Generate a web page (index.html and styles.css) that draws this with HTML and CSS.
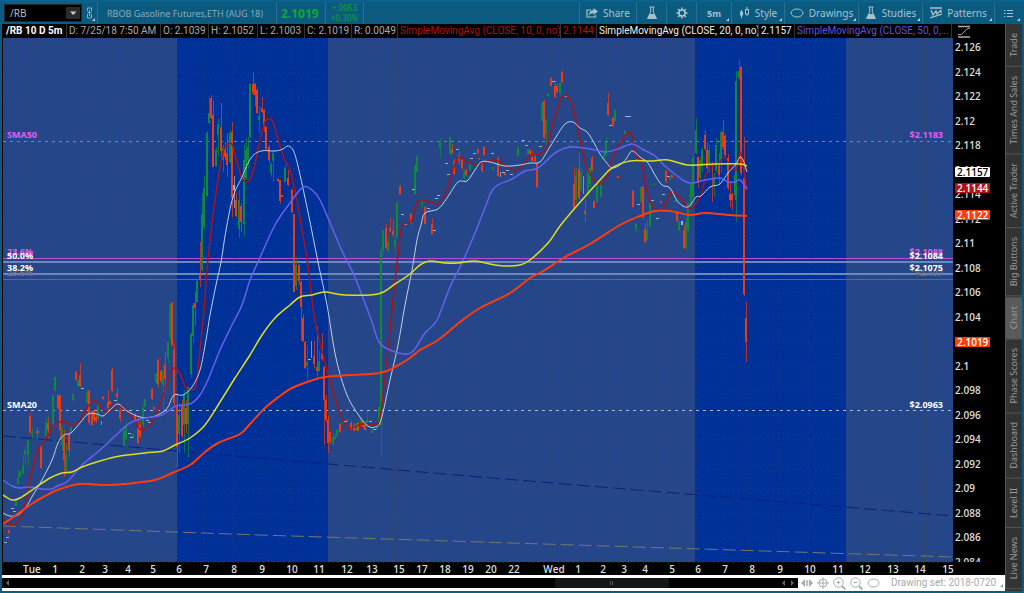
FILE: index.html
```html
<!DOCTYPE html>
<html lang="en">
<head>
    <meta charset="UTF-8">
    <meta name="viewport" content="width=device-width, initial-scale=1.0">
    <title>/RB 10 D 5m</title>
    <link rel="stylesheet" href="styles.css">
</head>
<body>
    <header class="toolbar">
        <div class="symbol">
            <select aria-label="Symbol">
                <option>/RB</option>
            </select>
            <svg class="symbol-arrow" viewBox="0 0 14 12"><rect width="14" height="12" rx="1" fill="#2b2b2b"/><path d="M4 4.500h6.500L7.200 8z" fill="#ccc"/></svg>
        </div>
        <button class="link-btn corner" aria-label="Link">
            <svg width="8" height="12" viewBox="0 0 8 12" fill="none" stroke="#8fa9b5"><path d="M1.500 4V1h4v3M1.500 7v4h4V7M3.500 3v6M1.500 5.500h4"/></svg>
        </button>
        <span class="title">RBOB Gasoline Futures,ETH (AUG 18)</span>
        <span class="last">2.1019</span>
        <span class="change"><span>+.0063</span><span>+0.30%</span></span>
        <span class="spacer"></span>
        <button class="tool share">
            <svg width="12" height="10" viewBox="0 0 12 10"><path d="M5 2H1v7h8.500V7" fill="none" stroke="#a9c0cb" stroke-width="1.200"/><path d="M7.500 0L12 3.500 7.500 7V5Q4 5 2.800 7.500 3 2.300 7.500 2z" fill="#a9c0cb"/></svg>
            Share
        </button>
        <button class="tool flask" aria-label="Lab">
            <svg width="12" height="14" viewBox="0 0 12 14"><path d="M3.500 1h5M4.700 1v5L1.500 12.500h9L7.300 6V1" fill="none" stroke="#a9c0cb"/><path d="M3.700 8h4.600l2.200 4.500h-9z" fill="#a9c0cb"/></svg>
        </button>
        <button class="tool gear" aria-label="Settings">
            <svg width="12" height="12" viewBox="0 0 12 12" fill="none" stroke="#b4c8d2"><circle cx="6" cy="6" r="3" stroke-width="1.500"/><path stroke-width="1.500" d="M6 .5v2M6 9.500v2M.5 6h2M9.500 6h2M2.100 2.100l1.400 1.400M8.500 8.500l1.400 1.400M2.100 9.900l1.400-1.400M8.500 3.500l1.400-1.400"/></svg>
        </button>
        <button class="tool period corner">5m</button>
        <button class="tool style corner">
            <svg width="11" height="12" viewBox="0 0 11 12"><path d="M2.500 3v8M8 0v9" stroke="#a9c0cb"/><rect x="1" y="4.500" width="3" height="4" fill="#a9c0cb"/><rect x="6.500" y="2.500" width="3" height="4.500" fill="#0b5b80" stroke="#a9c0cb"/></svg>
            Style
        </button>
        <button class="tool drawings corner">
            <svg width="14" height="10" viewBox="0 0 14 10"><ellipse cx="7" cy="5" rx="6" ry="4" fill="none" stroke="#a9c0cb"/></svg>
            Drawings
        </button>
        <button class="tool studies corner">
            <svg width="12" height="14" viewBox="0 0 12 14"><path d="M3.500 1h5M4.700 1v5L1.500 12.500h9L7.300 6V1" fill="none" stroke="#a9c0cb"/><path d="M3.700 8h4.600l2.200 4.500h-9z" fill="#a9c0cb"/></svg>
            Studies
        </button>
        <button class="tool patterns corner">
            <svg width="12" height="12" viewBox="0 0 12 12" fill="none" stroke="#a9c0cb" stroke-width="1.300"><path d="M0 1h12M0 11l12-4M1 3l2 5 3-4 1 3 4-4M11 3v3"/></svg>
            Patterns
        </button>
        <button class="tool menu corner" aria-label="Menu">
            <svg width="9" height="9" viewBox="0 0 9 9" stroke="#a9c0cb"><path d="M0 1.500h1.500M3 1.500h6M0 4.500h1.500M3 4.500h6M0 7.500h1.500M3 7.500h6"/></svg>
        </button>
    </header>

    <div class="main">
        <main class="chart-panel">
            <div class="info">
                <span class="name">/RB 10 D 5m</span>
                <span>D: 7/25/18 7:50 AM</span>
                <span>O: 2.1039</span>
                <span>H: 2.1052</span>
                <span>L: 2.1003</span>
                <span>C: 2.1019</span>
                <span>R: 0.0049</span>
                <span class="red">SimpleMovingAvg (CLOSE, 10, 0, no)</span>
                <span class="red">2.1144</span>
                <span class="white">SimpleMovingAvg (CLOSE, 20, 0, no)</span>
                <span class="white">2.1157</span>
                <span class="violet">SimpleMovingAvg (CLOSE, 50, 0,...</span>
                <svg class="scale-icon" width="14" height="13" viewBox="0 0 14 13" fill="none" stroke="#aaa"><path d="M1 1.500h12M1 12h12" stroke-width="1.500"/><path d="M1 9.500q4 1 6-2.500t6-4"/></svg>
            </div>

            <svg class="chart" id="chart" viewBox="2 38 1003 537" role="img" aria-label="/RB price chart">
                <defs>
                    <clipPath id="plot"><rect x="3" y="38" width="1002" height="524"/></clipPath>
                </defs>
                <rect x="2" y="38" width="1003" height="537" fill="#000"/>
                <rect x="3" y="38" width="950" height="524" fill="#254688"/>
                <rect x="177" y="38" width="151" height="524" fill="#003198"/>
                <rect x="695" y="38" width="151" height="524" fill="#003198"/>
                <g id="grid" class="grid"></g>
                <path class="day" d="M394.500 38V562M924.500 38V562"/>
                <polyline class="trend navy" points="3,436 480,477 953,516"/>
                <polyline class="trend tan" points="3,526 260,535 953,557"/>

                <path class="level sma50" d="M3 141.500H953"/>
                <path class="level sma20" d="M3 410.500H953"/>
                <path d="M3 258.500H953" stroke="#b94fd6"/>
                <path d="M3 262H953M3 274H953" stroke="#7088b8" stroke-width="2"/>
                <path d="M3 279.500H953" stroke="#5d6b82"/>

                <g id="candles"></g>
                <g id="averages" class="averages"></g>

                <g class="tag">
                    <text x="7" y="138" fill="#e85cf0">SMA50</text>
                    <text x="943" y="138" fill="#e85cf0" text-anchor="end">$2.1183</text>
                    <text x="7" y="408">SMA20</text>
                    <text x="943" y="408" text-anchor="end">$2.0963</text>
                    <text x="7" y="276" fill="#6d7078">23.6%</text>
                    <text x="943" y="276" fill="#6d7078" text-anchor="end">$2.107</text>
                    <text x="7" y="255" fill="#e85cf0">23.6%</text>
                    <text x="943" y="255" fill="#e85cf0" text-anchor="end">$2.1088</text>
                    <text x="7" y="259">50.0%</text>
                    <text x="943" y="259" text-anchor="end">$2.1084</text>
                    <text x="7" y="271">38.2%</text>
                    <text x="943" y="271" text-anchor="end">$2.1075</text>
                </g>
                <g id="prices" class="axis" clip-path="url(#plot)"></g>
                <g id="badges" class="axis"></g>
                <g id="times" class="axis time"></g>
            </svg>

            <footer class="bottom">
                <div class="scrollbar">
                    <svg width="4" height="6" viewBox="0 0 4 6"><path d="M4 0v6L1 3z" fill="#666"/></svg>
                    <div class="track"><div class="thumb"></div></div>
                    <svg width="4" height="6" viewBox="0 0 4 6"><path d="M4 0v6L1 3z" fill="#666"/></svg>
                    <svg width="4" height="6" viewBox="0 0 4 6"><path d="M0 0v6l3-3z" fill="#666"/></svg>
                </div>
                <div class="zoom-tools">
                    <button aria-label="Expand"><svg width="12" height="8" viewBox="0 0 12 8" fill="#aaa"><path d="M4 0v8L0 4zM8 0v8l4-4zM5 1h.8v6H5zM6.300 1h.8v6h-.8z"/></svg></button>
                    <button aria-label="Crosshair"><svg width="12" height="12" viewBox="0 0 12 12" fill="none" stroke="#aaa"><circle cx="6" cy="6" r="4"/><path d="M6 0v12M0 6h12"/></svg></button>
                    <button aria-label="Zoom in"><svg width="13" height="13" viewBox="0 0 13 13" fill="none" stroke="#aaa"><circle cx="5.500" cy="5.500" r="4.700"/><path d="M5.500 3.500v4M3.500 5.500h4"/><path d="M9 9l3.500 3.500" stroke-width="1.800"/></svg></button>
                    <button aria-label="Zoom out"><svg width="13" height="13" viewBox="0 0 13 13" fill="none" stroke="#aaa"><circle cx="5.500" cy="5.500" r="4.700"/><path d="M3.500 5.500h4"/><path d="M9 9l3.500 3.500" stroke-width="1.800"/></svg></button>
                    <button aria-label="Ellipse"><svg width="13" height="10" viewBox="0 0 13 10"><ellipse cx="6.500" cy="5" rx="5.500" ry="4" fill="none" stroke="#aaa"/></svg></button>
                </div>
                <button class="drawing-set corner">Drawing set: 2018-0720</button>
            </footer>
        </main>

        <nav class="tabs">
            <button>Trade</button>
            <button>Times And Sales</button>
            <button>Active Trader</button>
            <button>Big Buttons</button>
            <button class="active">Chart</button>
            <button>Phase Scores</button>
            <button>Dashboard</button>
            <button>Level II</button>
            <button>Live News</button>
        </nav>
    </div>
    <script src="chart.js"></script>
</body>
</html>
```
FILE: styles.css
```css
* {
    box-sizing: border-box;
}
body {
    margin: 0;
    min-height: 100vh;
    display: flex;
    flex-direction: column;
    font-family: "Noto Sans", "Open Sans", sans-serif;
    font-size: 10px;
    background-color: #0b5b80;
}
button {
    font: inherit;
    color: inherit;
    background: none;
    border: none;
    padding: 0;
    margin: 0;
    cursor: pointer;
}
svg {
    display: block;
    flex: none;
}

/* toolbar */
.toolbar {
    display: flex;
    align-items: stretch;
    height: 24px;
    padding: 2px 2px 0 4px;
    color: #a9c0cb;
    background: linear-gradient(#0a658f, #0b5b80 4px);
}
.symbol {
    position: relative;
    width: 78px;
    height: 18px;
    margin-top: 2px;
    background-color: #000;
    border: 1px solid #1c2a30;
}
.symbol select {
    appearance: none;
    width: 100%;
    height: 16px;
    padding: 0 5px;
    border: none;
    background: transparent;
    color: #bbb;
    font: inherit;
    line-height: 16px;
}
.symbol-arrow {
    position: absolute;
    right: 1px;
    top: 2px;
    width: 14px;
    height: 12px;
    pointer-events: none;
}
.link-btn {
    width: 15px;
    padding-left: 4px;
}
.corner {
    position: relative;
}
.corner::after {
    content: "";
    position: absolute;
    right: 2px;
    bottom: 3px;
    border-left: 3px solid transparent;
    border-bottom: 3px solid #c0d0d8;
}
.title,
.last,
.change {
    display: flex;
    align-items: center;
    padding: 0 5px;
    border-right: 1px solid #2a7091;
}
.title {
    width: 180px;
    padding-left: 9px;
    white-space: nowrap;
    font-size: 9px;
    color: #8fa9b5;
    border-left: 1px solid #2a7091;
}
.last {
    width: 49px;
    padding-left: 4px;
    font-size: 12px;
    font-weight: bold;
    color: #12a82c;
}
.change {
    width: 38px;
    flex-direction: column;
    justify-content: center;
    font-size: 8px;
    line-height: 10px;
    color: #12a030;
}
.spacer {
    flex: 1;
}
.tool {
    display: flex;
    align-items: center;
    justify-content: center;
    gap: 5px;
    border-left: 1px solid #2a7091;
}
.share {
    width: 57px;
}
.flask,
.gear {
    width: 30px;
}
.period {
    width: 35px;
    font-size: 9px;
    font-weight: bold;
}
.style {
    width: 53px;
}
.drawings {
    width: 74px;
}
.studies {
    width: 64px;
}
.patterns {
    width: 72px;
}
.menu {
    width: 28px;
}

/* chart */
.main {
    flex: 1;
    display: flex;
    padding: 0 2px 2px;
}
.chart-panel {
    flex: 1;
    min-width: 0;
    display: flex;
    flex-direction: column;
}
.info {
    display: grid;
    grid-template-columns: 65px 94px 48px 49px 47px 47px 46px 163px 36px 162px 36px 1fr 53px;
    height: 14px;
    line-height: 14px;
    font-family: Roboto, sans-serif;
    background-color: #000;
    color: #aaa;
}
.info span {
    overflow: hidden;
    padding-left: 2px;
    white-space: nowrap;
    border-right: 1px solid #333;
}
.info .name {
    padding-left: 4px;
    font-weight: bold;
    color: #fff;
}
.info .red {
    color: #b01010;
}
.info .white {
    color: #eee;
}
.info .violet {
    color: #5f55d8;
}
.scale-icon {
    margin: 1px 0 0 5px;
}
.chart {
    width: 100%;
    height: auto;
    font-family: "Open Sans", "Noto Sans", sans-serif;
    font-size: 10px;
    font-weight: 600;
    fill: #fff;
}
.tag {
    font-size: 9px;
    font-weight: 700;
}
.grid path {
    stroke: #4a4a58;
    stroke-opacity: 0.45;
    stroke-dasharray: 1 4;
}
.day {
    stroke: #3b4660;
    stroke-dasharray: 6 3;
}
.trend {
    fill: none;
    stroke-dasharray: 13 5;
}
.navy {
    stroke: #0d1f7c;
}
.tan {
    stroke: #77766f;
}
.level {
    stroke-dasharray: 3 4;
}
.sma50 {
    stroke: #b45fd0;
}
.sma20 {
    stroke: #aebbd6;
}
.up {
    stroke: #0f8a3c;
}
.down {
    stroke: #ee3a10;
}
.tick {
    stroke: #a0aec8;
}
.wick {
    stroke-opacity: 0.75;
}
.body {
    stroke-width: 2;
}
.averages {
    fill: none;
    stroke-linejoin: round;
}
.axis {
    fill: #ddd;
}
.time {
    text-anchor: middle;
}

/* bottom bar */
.bottom {
    display: flex;
    align-items: center;
    height: 16px;
    background-color: #fff;
    color: #aaa;
}
.scrollbar {
    flex: 1;
    display: flex;
    align-items: center;
    gap: 6px;
    height: 10px;
    padding: 0 3px;
    background-color: #000;
}
.track {
    flex: 1;
    height: 10px;
}
.thumb {
    width: 15%;
    height: 10px;
    margin-left: 71%;
    background: linear-gradient(90deg, #555 1px, transparent 1px 2px, #555 2px 3px, transparent 3px) center / 4px 4px no-repeat, #161616;
}
.zoom-tools {
    display: flex;
    align-items: center;
    gap: 4px;
    padding: 0 11px 0 3px;
}
.drawing-set {
    width: 114px;
    text-align: left;
    white-space: nowrap;
    line-height: 14px;
    font-family: Roboto, sans-serif;
}
.drawing-set::after {
    border-bottom-color: #999;
}

/* side tabs */
.tabs {
    display: flex;
    flex-direction: column;
    width: 17px;
    font-size: 9px;
    background-color: #333;
    color: #999;
}
.tabs button {
    width: 17px;
    padding: 9px 0;
    line-height: 16px;
    white-space: nowrap;
    writing-mode: vertical-rl;
    transform: rotate(180deg);
    border-top: 1px solid #555;
    border-right: 1px solid #555;
}
.tabs .active {
    background-color: #5a5a5a;
}
```
FILE: chart.js
```js
const NS = 'http://www.w3.org/2000/svg';

function add(parent, tag, attrs, text) {
    const el = document.createElementNS(NS, tag);
    for (const key in attrs) el.setAttribute(key, attrs[key]);
    if (text !== undefined) el.textContent = text;
    document.getElementById(parent).appendChild(el);
}

// time axis: label, x
const times = [['Tue', 32], [1, 55], [2, 82], [3, 105], [4, 128], [5, 153], [6, 179], [7, 206], [8, 234], [9, 262],
    [10, 292], [11, 319], [12, 347], [13, 372], [15, 399], [17, 422], [18, 445], [19, 468], [20, 491], [22, 514],
    ['Wed', 554], [1, 578], [2, 603], [3, 624], [4, 645], [5, 672], [6, 698], [7, 725], [8, 752], [9, 780],
    [10, 810], [11, 838], [12, 865], [13, 893], [14, 920], [15, 948]];
times.forEach(([label, x]) => {
    if (x < 940) add('grid', 'path', { d: `M${x - 2}.5 38V562` });
    add('times', 'text', { x: x, y: 573 }, label);
});

// price axis
for (let i = 0; i <= 21; i++) {
    const y = Math.round(47 + i * 24.52);
    add('grid', 'path', { d: `M3 ${y}.5H953` });
    add('prices', 'text', { x: 955, y: y + 4 }, parseFloat((2.126 - i * 0.002).toFixed(3)));
}

const badges = [[172, '2.1157', '#fff', '#000'], [188, '2.1144', '#b01212', '#fff'],
    [215, '2.1122', '#ff3c0a', '#fff'], [342, '2.1019', '#ff3c0a', '#fff']];
badges.forEach(([y, label, back, color]) => {
    add('badges', 'rect', { x: 955, y: y - 5, width: 35, height: 10, rx: 1, fill: back });
    add('badges', 'text', { x: 957, y: y + 4, fill: color }, label);
});

// candles: x, high, body top, body bottom, low
const up = `16,500,500,506,506 18,470,478,484,484 20,471,471,477,477 23,455,465,474,474 25,445,450,455,464 28,440,440,455,466
32,428,432,433,439 39,431,431,433,433 46,417,423,436,438 53,395,395,424,426 55,377,377,391,391 62,425,430,445,450
66,443,455,472,474 71,427,427,432,432 73,393,394,400,401 78,380,380,386,387 87,390,392,403,403 98,403,405,418,420
124,430,430,446,446 126,423,427,438,440 133,433,434,438,438 143,403,408,425,427 145,399,399,407,407 156,373,373,382,384
163,365,372,385,412 168,342,342,358,363 170,303,305,338,342 179,403,415,434,453 184,390,395,425,453 188,387,387,424,458
191,332,334,374,378 193,303,305,336,343 197,279,281,302,303 202,193,214,270,272 204,176,188,227,229 207,131,133,196,196
209,98,113,123,124 216,147,150,166,167 218,119,124,135,156 223,145,148,160,172 230,130,133,162,163 239,190,200,229,238
244,145,160,224,237 246,138,150,178,180 248,137,147,160,168 250,84,84,137,138 259,106,116,120,133 271,162,164,173,177
273,150,153,161,181 285,165,168,182,182 296,257,265,286,290 307,345,362,366,382 319,350,361,371,372 333,433,437,444,446
335,433,436,439,440 337,428,430,436,438 343,420,421,424,424 356,422,424,430,431 361,417,419,426,426 367,411,420,425,425
372,430,430,433,433 377,424,426,430,430 379,407,407,424,425 381,247,250,425,458 383,230,231,250,256 388,238,242,251,252
395,236,240,246,255 397,201,203,237,238 415,164,166,194,194 417,155,157,172,173 422,200,202,204,208 440,138,141,148,157
450,137,137,154,155 464,169,173,178,181 470,164,164,170,171 493,167,167,170,170 518,146,148,156,157 528,149,149,154,154
542,101,103,121,121 546,119,120,134,145 548,93,93,96,97 560,82,83,93,94 570,145,145,148,148 576,168,175,200,203
581,168,172,190,192 588,168,170,194,197 590,165,168,184,187 597,184,184,202,203 601,180,184,197,197 604,150,153,158,160
606,137,142,155,156 615,109,110,121,122 625,130,131,134,137 636,223,224,229,233 641,186,187,202,203 647,220,230,240,241
650,202,203,226,227 654,183,184,185,185 670,177,178,180,180 675,200,200,202,202 679,220,222,230,231 686,218,222,248,250
688,202,203,230,231 691,182,184,206,208 693,156,158,197,200 696,118,130,153,154 700,157,160,178,180 702,147,150,166,172
709,145,150,165,173 714,173,178,186,197 716,138,145,170,173 721,130,132,160,173 735,167,175,195,200 736,71,81,200,222
739,59,71,78,80`;
const down = `9,530,530,533,533 30,413,416,432,434 37,427,431,433,437 41,445,445,468,469 48,417,423,430,438 58,395,395,408,410
60,395,395,430,440 64,430,435,460,477 69,432,434,450,457 76,371,372,380,381 80,363,375,386,387 89,390,391,423,425
92,411,411,425,425 94,410,411,420,422 96,415,417,421,423 103,396,397,399,400 108,390,402,408,410 112,368,370,391,392
117,388,393,397,400 120,408,410,418,422 110,401,401,404,405 135,413,415,420,423 138,418,428,443,444 140,422,425,436,438
152,388,389,399,400 154,407,407,409,410 158,358,360,384,387 161,370,371,381,383 165,352,365,379,393 172,302,303,345,347
174,343,349,403,407 177,393,405,447,467 182,400,406,436,438 186,400,408,424,433 195,292,303,308,325 200,242,274,280,287
211,95,98,118,119 213,100,115,167,167 221,103,127,151,157 225,142,147,157,160 227,133,153,165,177 232,122,132,198,217
236,193,200,216,217 241,203,206,222,232 253,72,84,93,95 255,83,84,95,106 257,87,90,113,114 262,97,108,112,113
264,109,110,126,132 266,126,127,149,150 269,145,147,160,163 278,178,179,181,182 280,180,180,201,204 282,195,195,197,197
288,170,178,185,186 292,189,190,212,213 294,214,214,292,292 299,264,265,281,285 301,281,282,307,341 303,314,318,341,342
305,341,342,368,369 314,341,356,364,368 317,326,367,371,377 322,333,353,359,361 324,366,367,400,445 326,395,400,420,422
328,416,420,443,453 330,431,432,442,444 340,423,424,432,433 347,419,420,421,421 351,421,423,430,430 354,423,425,431,431
358,422,423,431,431 363,420,421,427,428 365,421,424,430,431 386,224,228,248,249 390,218,228,231,232 393,219,231,235,237
400,185,186,194,194 411,213,214,224,225 425,206,207,224,225 432,218,224,234,234 452,144,149,153,154 454,159,161,174,175
459,151,156,161,165 462,158,160,168,170 466,169,170,175,176 478,149,149,153,154 479,158,158,159,160 482,163,165,171,172
484,146,147,155,156 498,157,159,176,177 505,173,173,175,176 530,149,150,154,156 532,151,157,161,162 535,154,157,161,162
537,162,163,187,188 544,100,101,138,139 551,77,78,86,86 555,81,86,97,98 557,84,86,92,93 562,71,72,82,83
574,167,184,208,210 579,153,169,198,200 585,199,211,214,222 592,156,158,170,171 594,201,201,208,208 608,93,103,115,116
613,117,118,126,127 618,176,176,178,178 633,190,191,207,208 643,186,187,217,219 645,223,229,242,243 661,201,201,203,204
666,170,171,181,183 672,175,175,178,178 677,211,212,221,222 684,225,230,248,249 698,156,157,183,188 705,130,135,149,151
707,142,150,168,173 712,162,164,166,202 719,153,166,175,185 723,120,132,147,150 725,134,136,155,157 728,154,158,188,190
730,183,194,200,207 732,193,194,200,210 741,66,67,173,175 744,137,178,294,296 746,302,318,342,362`;
const neutral = `234,176,185,190,208 311,341,341,341,358 583,176,176,176,194 101,421,421,421,425 652,222,222,222,222 682,221,221,225,225 500,172,172,172,177`;

function drawCandles(rows, name) {
    rows.split(/\s+/).forEach(row => {
        const [x, high, top, bottom, low] = row.split(',');
        add('candles', 'path', { class: name + ' wick', d: `M${x}.5 ${high}V${low}` });
        add('candles', 'path', { class: name + ' body', d: `M${x} ${top}V${bottom}` });
    });
}
drawCandles(neutral, 'tick');
drawCandles(up, 'up');
drawCandles(down, 'down');

// bars with no range
const flat = [[5, 542], [7, 537], [12, 508], [14, 511], [82, 388], [115, 400], [129, 433], [131, 437], [147, 420], [149, 422],
    [309, 359], [402, 214], [405, 224], [413, 189], [428, 208], [436, 198], [438, 195], [434, 230], [446, 163], [448, 174],
    [457, 149], [471, 158], [474, 153], [492, 153], [503, 172], [507, 170], [511, 174], [523, 140], [526, 145], [540, 146],
    [553, 81], [565, 96], [610, 125], [626, 116], [629, 116], [638, 204], [652, 200], [657, 218], [663, 194], [668, 176], [345, 421], [370, 421], [374, 429]];
flat.forEach(([x, y]) => add('candles', 'path', { class: 'tick', d: `M${x - 1} ${y}.5h3` }));

const averages = [
    ['#a81418', 1.5, '3,519 8,524 17,523 23,512 27,495 31,475 37,452 41,445 49,434 57,423 66,422 70,426 79,421 85,411 92,402 96,401 105,412 112,409 117,404 125,410 133,418 140,429 148,427 156,415 163,396 169,377 174,368 180,374 186,388 192,389 196,385 200,350 204,310 207,270 209,250 213,215 218,180 223,152 227,145 232,144 237,162 242,178 244,181 249,181 254,168 259,145 265,122 270,119 273,122 277,135 284,158 290,170 296,195 303,235 308,265 314,315 322,351 335,398 346,427 354,427 362,424 374,424 379,423 383,395 389,340 394,290 398,255 402,226 411,222 418,201 430,202 438,204 447,190 455,163 461,157 467,162 475,164 488,161 495,160 504,165 517,170 530,156 535,154 540,154 547,147 554,120 560,101 564,96 569,97 574,112 580,140 586,165 591,176 600,184 606,179 612,160 616,151 624,137 631,133 636,155 641,162 648,195 655,209 664,208 670,193 676,194 682,200 688,208 695,205 701,195 706,175 711,166 719,163 724,157 730,165 736,170 740,152 743,165 747,190'],
    ['#c3cdea', 1, '3,513 10,516 18,515 26,507 33,495 42,480 52,460 58,443 64,435 71,433 80,423 88,414 97,414 103,416 110,410 118,404 127,411 140,417 152,417 163,412 168,407 174,395 183,395 192,387 200,370 206,340 210,315 216,285 221,262 226,230 233,197 242,177 251,158 261,151 275,151 283,149 288,146 293,150 298,166 308,212 318,262 327,305 336,358 347,395 360,417 368,426 375,427 381,420 390,380 398,345 405,305 412,270 417,240 421,225 425,213 438,209 447,198 458,182 467,181 475,170 481,162 490,162 505,166 520,165 530,163 540,162 548,150 556,137 565,124 573,122 580,128 587,132 593,141 600,154 606,162 612,168 620,165 626,159 632,151 640,157 648,163 655,175 662,185 670,188 678,202 688,207 696,197 701,196 710,187 720,184 728,173 736,164 740,157 743,160 747,172'],
    ['#6660f0', 1.5, '3,480 12,486 20,488 30,487 42,489 52,489 57,486 68,481 82,465 100,450 115,436 130,423 145,418 162,415 176,406 190,404 200,395 208,380 220,350 232,325 242,305 250,280 258,262 275,225 290,203 303,187 312,190 320,200 331,225 342,251 354,275 363,298 372,322 379,342 390,350 406,354 414,350 425,333 437,320 450,287 462,263 475,233 485,208 494,188 512,179 525,171 538,168 555,153 570,147 590,149 605,152 618,149 632,144 642,149 655,156 665,166 680,178 690,183 705,180 720,178 728,182 735,182 740,180 747,189'],
    ['#dede1e', 1.5, '3,495 12,500 20,498 35,488 50,478 62,473 72,472 82,467 100,461 120,456 145,453 163,451 175,445 190,438 205,425 220,402 235,378 250,355 262,335 275,318 290,305 300,297 312,295 325,292 345,295 378,294 395,284 410,274 420,265 430,261 445,263 458,263 475,261 490,264 505,266 520,265 530,260 548,243 560,226 575,208 600,180 612,168 630,161 650,161 668,160 688,165 715,164 740,164 747,166'],
    ['#ff3c0a', 2, '3,524 12,518 30,505 45,496 60,489 80,484 105,485 125,484 155,480 172,473 190,465 205,452 218,443 240,434 250,424 265,408 280,396 292,388 310,381 325,377 350,375 380,373 395,367 410,358 420,350 438,340 460,322 480,308 510,293 530,278 545,270 565,257 590,244 620,225 640,216 655,211 670,211 690,215 705,213 730,215 747,216']
];

// smooth curve through the points
function curve(list) {
    const p = list.split(' ').map(s => s.split(',').map(Number));
    let d = 'M' + p[0];
    for (let i = 0; i < p.length - 1; i++) {
        const a = p[i - 1] || p[i], b = p[i], c = p[i + 1], e = p[i + 2] || c;
        d += `C${b[0] + (c[0] - a[0]) / 6} ${b[1] + (c[1] - a[1]) / 6} ${c[0] - (e[0] - b[0]) / 6} ${c[1] - (e[1] - b[1]) / 6} ${c}`;
    }
    return d;
}
averages.forEach(([color, width, points]) => add('averages', 'path', { d: curve(points), stroke: color, 'stroke-width': width }));
```
